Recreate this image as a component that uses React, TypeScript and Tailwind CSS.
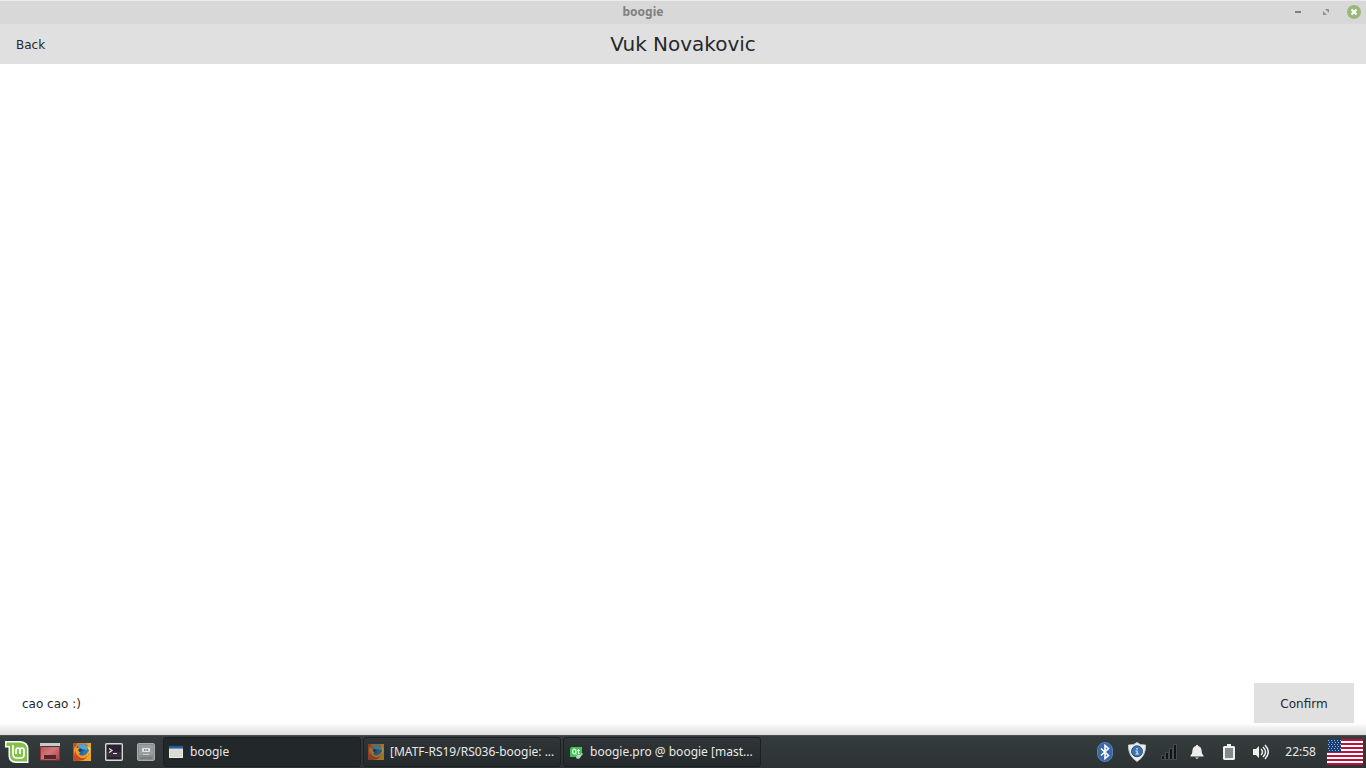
import { useState, type ReactNode } from "react";

function MintLogo() {
  return (
    <svg viewBox="0 0 24 24" className="size-6" aria-hidden="true">
      <path d="M0 1h15q8.500.5 8.500 8v14H11q-7.500-.5-7.500-7V7.500H0Z" fill="#fff" />
      <path d="M1.500 2.500H15q7 .5 7 7v12H11.500q-6.500-.5-6.500-6V6H1.500Z" fill="#85c04b" />
      <path d="M8 5v9q0 4 4 4h3.500q3.500 0 3.500-3.500V10.500Q19 8 17 8t-2 2.500V14M15 10.500Q15 8 13 8t-2 2.500V14" fill="none" stroke="#fff" strokeWidth="1.700" />
    </svg>
  );
}

function DesktopIcon() {
  return (
    <svg viewBox="0 0 20 18" className="h-[18px] w-5" aria-hidden="true">
      <defs>
        <linearGradient id="desk" x2="1" y2="1">
          <stop stopColor="#b5494b" />
          <stop offset=".5" stopColor="#cf777a" />
          <stop offset="1" stopColor="#ad3d3f" />
        </linearGradient>
      </defs>
      <rect x=".5" y="1" width="19" height="16" fill="url(#desk)" stroke="#933638" />
      <path d="M0 0h20v3H0z" fill="#c9caca" />
      <path d="M1 3h18v1H1z" fill="#4d3030" />
      <path d="M4 12h12v4H4z" fill="#542628" />
      <path d="M4 16h12v1H4z" fill="#b85c5d" />
    </svg>
  );
}

function FirefoxIcon({ dim = false }: { dim?: boolean }) {
  return (
    <svg viewBox="0 0 18 18" className={dim ? "size-4 opacity-60" : "size-[18px]"} aria-hidden="true">
      <path d="M0 0h18v18H0z" fill="#d98325" />
      <path d="M0 0h4L2 5v7l5 6H0z" fill="#c64b20" />
      <path d="M14 0h4v18H9l6-5 1-7z" fill="#e7a534" />
      <circle cx="9.500" cy="8" r="7" fill="#21649b" />
      <path d="M6 1.500 11 1l4 3-1 4-3-2-3 1-3-3z" fill="#55a4ce" />
      <path d="m10 8 4-1-1 4-4 2-3-1 4-1z" fill="#287bb5" />
      <path d="M2 3q0 2 2 2 2-1 3 1L5.500 8l2 2-2 1q3 3 6 1 3-1 3.500-5 2 5-1 8-5 4-10 0Q-1 10 2 3Z" fill="#f19b24" />
      <path d="M2 7q1 6 6 8 4 1 6-2-2 5-7 4-6-2-5-10Z" fill="#ca421e" />
      <path d="m7 5 3 2-3 2-2-2z" fill="#183d73" />
      <path d="m14 3 2 5-2 4 3-3 .5-4z" fill="#f4cf48" />
    </svg>
  );
}

function TerminalIcon() {
  return (
    <svg viewBox="0 0 18 18" className="size-[18px]" aria-hidden="true">
      <rect x=".7" y=".7" width="16.600" height="16.600" rx="1" fill="#29212f" stroke="#dad7d7" strokeWidth="1.400" />
      <path d="M2 9h14v5H2z" fill="#39303f" />
      <path d="m4 5.500 3 2-3 2M8 10.500h4" fill="none" stroke="#ece8ec" strokeWidth="1.200" />
    </svg>
  );
}

function FilesIcon() {
  return (
    <svg viewBox="0 0 18 18" className="size-[18px]" aria-hidden="true">
      <rect x=".5" y=".5" width="17" height="17" rx="1.500" fill="#8b8c8c" stroke="#a9aaaa" />
      <path d="M2 2h14v10H2z" fill="#9b9c9c" />
      <rect x="5" y="5" width="8" height="4" rx="1" fill="#e0e3e5" />
      <path d="M7 6h1.500v2H7zm2.500 0H11v2H9.500z" fill="#7594b0" />
      <path d="M6 11h6v1H6z" fill="#d0d1d1" />
      <path d="M3 14h12v2H3z" fill="#7b7c7c" />
    </svg>
  );
}

function WindowIcon() {
  return (
    <svg viewBox="0 0 16 16" className="size-4" aria-hidden="true">
      <path d="M1 2h14v12H1z" fill="#e9eae5" />
      <path d="M2 5h12v8H2z" fill="#d9dcd4" />
      <path d="M1 2h14v3H1z" fill="#2c5ba2" />
      <path d="M1 4h14v1H1z" fill="#6c94c5" />
    </svg>
  );
}

function QtIcon() {
  return (
    <svg viewBox="0 0 16 16" className="size-4" aria-hidden="true">
      <path d="M3 3h11v8l-2 2H2V5z" fill="#3bc653" />
      <ellipse cx="6.300" cy="7.500" rx="1.700" ry="2.400" fill="none" stroke="#e4f5e5" strokeWidth="1.200" />
      <path d="m7 9 1.500 1.500M10.500 5v4q0 1 1.500.7M9 6.500h3" fill="none" stroke="#e4f5e5" strokeWidth="1.100" />
      <path d="m8 14 1-3 3 0 2-2 1 1-2 2-1 2-2 1z" fill="#c9d1cc" />
    </svg>
  );
}

function BluetoothIcon() {
  return (
    <svg viewBox="0 0 16 20" className="h-5 w-4" aria-hidden="true">
      <rect x=".5" y=".5" width="15" height="19" rx="7.500" fill="#3969a6" stroke="#5482b9" />
      <path d="m4 6.500 7.500 7L8 16.500v-13l3.500 3-7.500 7" fill="none" stroke="#fff" strokeWidth="1.600" />
    </svg>
  );
}

function ShieldIcon() {
  return (
    <svg viewBox="0 0 20 20" className="size-5" aria-hidden="true">
      <path d="M10 .5q3 3 8.500 2.500.5 11-8.500 16.500Q1 14 1.500 3 7 3.500 10 .5Z" fill="#f2f2ed" stroke="#c8c9c4" />
      <circle cx="10" cy="9.300" r="5.500" fill="#3974b2" stroke="#234f84" />
      <path d="M9.300 6h1.400v1.400H9.300zM8.500 8.500h2.200v3H12v.9H8.500v-.9h1v-2h-1z" fill="#dce8f3" />
    </svg>
  );
}

function SignalIcon() {
  return (
    <svg viewBox="0 0 16 16" className="size-4" aria-hidden="true">
      <path d="M.5 11.500h3v4h-3zm4-3h3v7h-3zm4-4h3v11h-3zm4-4h3v15h-3z" fill="#111515" stroke="#515757" strokeWidth=".8" />
    </svg>
  );
}

function BellIcon() {
  return (
    <svg viewBox="0 0 16 16" className="size-4" aria-hidden="true">
      <path d="M7 1h2v1q3 .5 3.500 4l.5 3.500 1.500 2v1h-13v-1l1.500-2L3.500 6Q4 2.500 7 2zM6 13.500h4L8 15z" fill="#ededeb" />
    </svg>
  );
}

function BatteryIcon() {
  return (
    <svg viewBox="0 0 12 16" className="h-4 w-3" aria-hidden="true">
      <path d="M4 0h4v2h3l1 1v12l-1 1H1l-1-1V3l1-1h3z" fill="#eeeeeb" />
      <path d="M2 4h8v10H2z" fill="#858a88" />
    </svg>
  );
}

function VolumeIcon() {
  return (
    <svg viewBox="0 0 16 16" className="size-4" aria-hidden="true">
      <path d="M0 5h3l3-3v12l-3-3H0z" fill="#f0f0ed" />
      <path d="M8 5q3 3 0 6M10 3q5 5 0 10M12 1q6.500 7 0 14" fill="none" stroke="#ededeb" strokeWidth="1.500" />
    </svg>
  );
}

function FlagIcon() {
  return (
    <svg viewBox="0 0 36 26" className="h-[26px] w-9" aria-hidden="true">
      <path d="M0 0h36v26H0z" fill="#fff" />
      <path d="M0 1h36M0 5h36M0 9h36M0 13h36M0 17h36M0 21h36M0 25h36" stroke="#bd1238" strokeWidth="2" />
      <path d="M0 0h14v13H0z" fill="#173d73" />
      <path d="M1 1.500h13M2 3.500h12M1 5.500h13M2 7.500h12M1 9.500h13M2 11.500h12" stroke="#a9b9cc" strokeDasharray="1 2" />
    </svg>
  );
}

function Launcher({ label, children }: { label: string; children: ReactNode }) {
  return <button aria-label={label} className="flex h-8 w-8 items-center justify-center">{children}</button>;
}

function Task({ label, icon, active = false }: { label: string; icon: ReactNode; active?: boolean }) {
  return (
    <button className={`flex h-[30px] w-[198px] min-w-0 items-center gap-1.5 rounded-[3px] border border-[#1c2022] px-1 text-left ${active ? "bg-[#22272a]" : "bg-linear-to-b from-[#303639] to-[#24292b]"}`}>
      {icon}
      <span className="truncate">{label}</span>
    </button>
  );
}

export default function App() {
  const [message, setMessage] = useState("cao cao :)");
  return (
    <div className="flex min-h-screen flex-col bg-white font-['DejaVu_Sans',sans-serif] text-xs text-[#26282a]">
      <header className="flex h-6 items-center border-t border-[#ebebeb] bg-[#d8d8d8]">
        <h1 className="flex-1 pb-0.5 text-center font-['Noto_Sans',sans-serif] text-xs font-bold text-[#808080]">boogie</h1>
        <div className="flex items-center gap-3 px-1 pb-0.5">
          <button aria-label="Minimize" className="flex size-4 items-center justify-center">
            <svg viewBox="0 0 16 16" className="size-4"><path d="M5 7h6v2H5z" fill="#808080" /></svg>
          </button>
          <button aria-label="Restore" className="flex size-4 items-center justify-center">
            <svg viewBox="0 0 16 16" className="size-4"><path d="M7 5h4v4zM5 7v4h4z" fill="#909090" /></svg>
          </button>
          <button aria-label="Close" className="flex size-4 items-center justify-center">
            <svg viewBox="0 0 16 16" className="size-4"><circle cx="8" cy="8" r="7" fill="#9ab87c" /><path d="m5.500 5.500 5 5m0-5-5 5" stroke="#fff" strokeWidth="2" /></svg>
          </button>
        </div>
      </header>
      <nav className="grid h-10 grid-cols-[1fr_auto_1fr] items-center bg-[#e0e0e0]">
        <button className="h-10 justify-self-start px-4 pt-0.5">Back</button>
        <h2 className="text-xl leading-6">Vuk Novakovic</h2>
      </nav>
      <main className="flex flex-1 flex-col justify-end">
        <div className="flex items-center gap-3 pr-3 pl-4">
          <input aria-label="Message" value={message} onChange={(e) => setMessage(e.target.value)} className="h-10 min-w-0 flex-1 px-1.5 pt-0.5 outline-none" />
          <button className="h-10 w-25 bg-[#e0e0e0] pt-0.5">Confirm</button>
        </div>
        <div className="h-3 bg-linear-to-b from-white to-[#dcdcdc]" />
      </main>
      <footer className="flex h-[33px] items-center border-t border-[#465052] bg-linear-to-b from-[#343c3e] to-[#2d3334] font-['Noto_Sans',sans-serif] text-xs text-[#e8e8e8]">
        <div className="flex pl-0.5">
          <button aria-label="Menu" className="flex h-8 w-8 items-center pl-[3px]"><MintLogo /></button>
          <Launcher label="Show desktop"><DesktopIcon /></Launcher>
          <Launcher label="Firefox"><FirefoxIcon /></Launcher>
          <Launcher label="Terminal"><TerminalIcon /></Launcher>
          <Launcher label="Files"><FilesIcon /></Launcher>
        </div>
        <div className="flex min-w-0 flex-1 gap-0.5 pl-px">
          <Task label="boogie" icon={<WindowIcon />} active />
          <Task label="[MATF-RS19/RS036-boogie: ..." icon={<FirefoxIcon dim />} />
          <Task label="boogie.pro @ boogie [mast..." icon={<QtIcon />} />
        </div>
        <div className="flex items-center pr-[3px]">
          <Launcher label="Bluetooth"><BluetoothIcon /></Launcher>
          <Launcher label="Update manager"><ShieldIcon /></Launcher>
          <Launcher label="Network"><SignalIcon /></Launcher>
          <button aria-label="Notifications" className="flex h-8 w-6 items-center justify-center"><BellIcon /></button>
          <button aria-label="Battery" className="flex h-8 w-10 items-center justify-center"><BatteryIcon /></button>
          <button aria-label="Volume" className="flex h-8 w-6 items-center justify-center"><VolumeIcon /></button>
          <time className="pr-[11px] pl-3">22:58</time>
          <button aria-label="Keyboard layout: United States"><FlagIcon /></button>
        </div>
      </footer>
    </div>
  );
}
